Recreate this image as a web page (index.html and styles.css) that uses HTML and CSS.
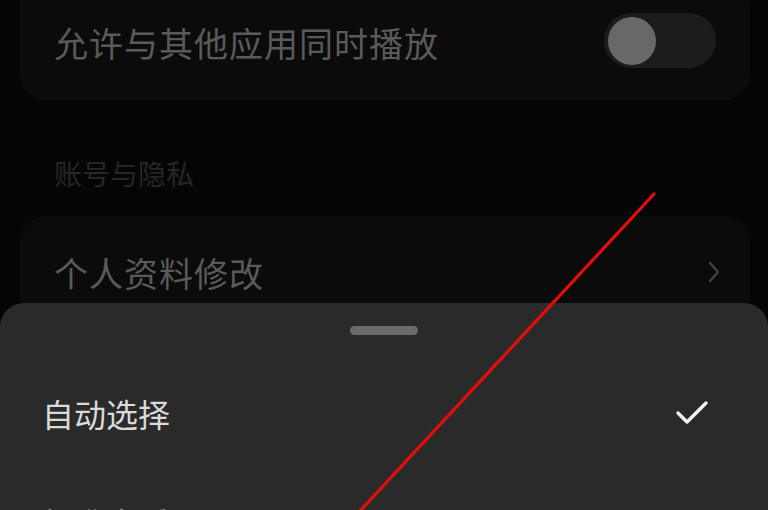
FILE: index.html
```html
<!DOCTYPE html>
<html lang="zh-CN">
<head>
    <meta charset="UTF-8">
    <meta name="viewport" content="width=device-width, initial-scale=1.0">
    <title>设置</title>
    <link rel="stylesheet" href="styles.css">
</head>
<body>

    <main class="settings">
        <section class="card card-top">
            <div class="row">
                <span class="row-title">允许与其他应用同时播放</span>
                <div class="toggle"><div class="knob"></div></div>
            </div>
        </section>

        <h2 class="group-label">账号与隐私</h2>

        <section class="card">
            <div class="row row-link">
                <span class="row-title">个人资料修改</span>
                <svg class="chevron" width="12" height="22" viewBox="0 0 12 22">
                    <path d="M2 2 L10 11 L2 20" fill="none" stroke="#444" stroke-width="2.2" stroke-linecap="round" stroke-linejoin="round"/>
                </svg>
            </div>
        </section>
    </main>

    <!-- bottom sheet over the settings list -->
    <div class="sheet">
        <div class="handle"></div>
        <div class="option">
            <span class="option-text">自动选择</span>
            <svg class="check" width="36" height="30" viewBox="0 0 36 30">
                <path d="M4 15 L13 24 L32 5" fill="none" stroke="#f2f2f2" stroke-width="3.4" stroke-linecap="round" stroke-linejoin="round"/>
            </svg>
        </div>
        <div class="option option-next">
            <span class="option-text">标准音质</span>
        </div>
    </div>

    <!-- annotation line -->
    <svg class="mark" width="768" height="510" viewBox="0 0 768 510">
        <line x1="654" y1="194" x2="359" y2="512" stroke="#e30d0d" stroke-width="3.2" stroke-linecap="round"/>
    </svg>

</body>
</html>
```

FILE: styles.css
```css
body {
    margin: 0;
    background-color: #050505;
    font-family: "Noto Sans CJK SC", "Noto Sans", sans-serif;
    width: 768px;
    height: 510px;
    overflow: hidden;
    position: relative;
}

.settings {
    padding: 0 18px 0 20px;
}

.card {
    background-color: #0b0b0b;
    border-radius: 26px;
}

.card-top {
    margin-top: -20px;
}

.row {
    display: flex;
    align-items: center;
    justify-content: space-between;
    padding: 0 34px;
}

.card-top .row {
    height: 120px;
    padding-right: 34px;
}

.row-link {
    height: 112px;
    padding-right: 30px;
}

.row-title {
    font-size: 34px;
    color: #5a5a5a;
    letter-spacing: 1px;
}

.card-top .row-title {
    margin-top: 5px;
}

.toggle {
    width: 112px;
    height: 55px;
    border-radius: 28px;
    background-color: #1c1c1c;
    position: relative;
}

.knob {
    position: absolute;
    left: 4px;
    top: 4px;
    width: 48px;
    height: 48px;
    border-radius: 50%;
    background-color: #686868;
}

.group-label {
    margin: 53px 0 23px 34px;
    height: 40px;
    line-height: 40px;
    font-size: 28px;
    font-weight: 400;
    color: #262626;
}

.sheet {
    position: absolute;
    left: 0;
    right: 0;
    top: 303px;
    bottom: 0;
    overflow: hidden;
    background-color: #2a2a2a;
    border-radius: 24px 24px 0 0;
    padding-top: 23px;
}

.handle {
    width: 68px;
    height: 9px;
    margin: 0 auto;
    border-radius: 5px;
    background-color: #6b6b6b;
}

.option {
    display: flex;
    align-items: center;
    justify-content: space-between;
    height: 100px;
    padding: 0 58px 0 42px;
}

.handle + .option {
    margin-top: 28px;
}

.option-text {
    font-size: 32px;
    color: #dadada;
}

.option-next {
    margin-top: 9px;
}

.option-next .option-text {
    color: #8a8a8a;
}

.mark {
    position: absolute;
    left: 0;
    top: 0;
    pointer-events: none;
}
```
